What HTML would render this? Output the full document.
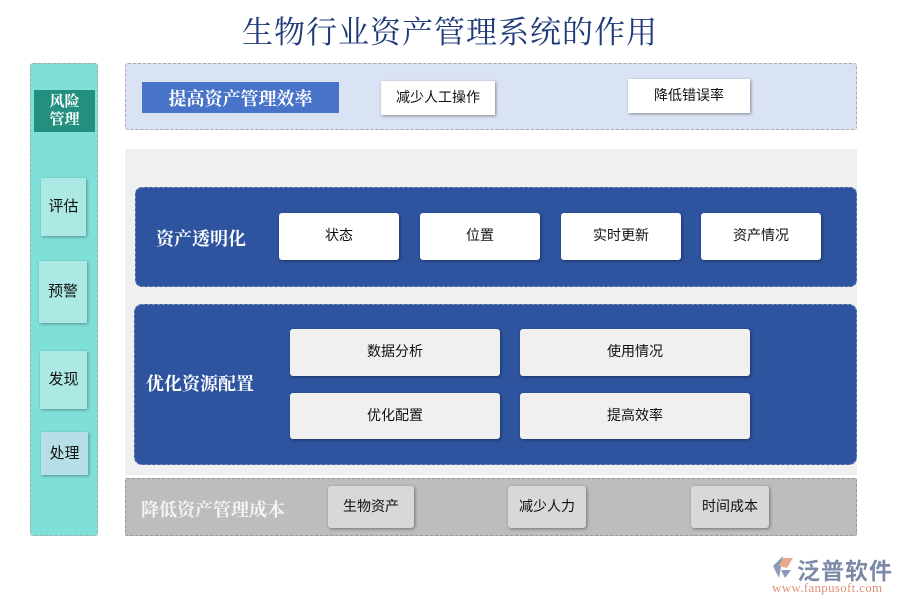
<!DOCTYPE html>
<html><head><meta charset="utf-8"><style>
*{margin:0;padding:0;box-sizing:border-box}
body{width:900px;height:600px;background:#fff;position:relative;font-family:"Liberation Sans","Noto Sans CJK SC",sans-serif;overflow:hidden}
.a{position:absolute}
.c{display:flex;align-items:center;justify-content:center;text-align:center;padding-bottom:3px}
.title{left:0;top:7px;width:900px;font-family:"Liberation Serif","Noto Serif CJK SC",serif;font-size:31px;color:#1f3a78;text-align:center;font-weight:normal;letter-spacing:1px}
.side{left:30px;top:63px;width:68px;height:473px;background:#7fe0d8;border:1px dashed #aaa;border-radius:3px}
.sb{background:#ade9e4;box-shadow:1px 1px 3px rgba(0,0,0,.35);font-size:15px;color:#111}
.serif{font-family:"Liberation Serif","Noto Serif CJK SC",serif;font-weight:bold}
.wb{background:#fff;border-radius:3px;box-shadow:1px 1px 3px rgba(0,0,0,.4);font-size:14px;color:#111}
.gb{background:#f0f0f0;border-radius:3px;box-shadow:1px 1px 3px rgba(0,0,0,.4);font-size:14px;color:#111}
</style></head><body>
<div class="a title">生物行业资产管理系统的作用</div>
<div class="a side"></div>
<div class="a c serif" style="left:34px;top:90px;width:61px;height:42px;background:#23907f;color:#fff;font-size:15px;line-height:18px;padding:0">风险<br>管理</div>
<div class="a c sb" style="left:41px;top:178px;width:45px;height:58px">评估</div>
<div class="a c sb" style="left:39px;top:261px;width:48px;height:62px">预警</div>
<div class="a c sb" style="left:40px;top:351px;width:47px;height:58px">发现</div>
<div class="a c sb" style="left:41px;top:432px;width:47px;height:43px;background:#b7dfe8">处理</div>

<div class="a" style="left:125px;top:63px;width:732px;height:67px;background:#dae3f4;border:1px dashed #aaa;border-radius:3px"></div>
<div class="a c serif" style="left:142px;top:82px;width:197px;height:31px;background:#4773c9;color:#fff;font-size:18px;padding:0">提高资产管理效率</div>
<div class="a c wb" style="left:381px;top:81px;width:114px;height:34px;border-radius:0">减少人工操作</div>
<div class="a c wb" style="left:628px;top:79px;width:122px;height:34px;border-radius:0">降低错误率</div>

<div class="a" style="left:125px;top:149px;width:732px;height:326px;background:#f0f0f0"></div>
<div class="a" style="left:135px;top:187px;width:722px;height:100px;background:#2e54a0;border-radius:7px;border:1px dashed #7a8cb8"></div>
<div class="a serif" style="left:156px;top:225px;color:#fff;font-size:18px">资产透明化</div>
<div class="a c wb" style="left:279px;top:213px;width:120px;height:47px">状态</div>
<div class="a c wb" style="left:420px;top:213px;width:120px;height:47px">位置</div>
<div class="a c wb" style="left:561px;top:213px;width:120px;height:47px">实时更新</div>
<div class="a c wb" style="left:701px;top:213px;width:120px;height:47px">资产情况</div>

<div class="a" style="left:134px;top:304px;width:723px;height:161px;background:#2e54a0;border-radius:8px;border:1px dashed #7a8cb8"></div>
<div class="a serif" style="left:146px;top:370px;color:#fff;font-size:18px">优化资源配置</div>
<div class="a c gb" style="left:290px;top:329px;width:210px;height:47px">数据分析</div>
<div class="a c gb" style="left:520px;top:329px;width:230px;height:47px">使用情况</div>
<div class="a c gb" style="left:290px;top:393px;width:210px;height:46px">优化配置</div>
<div class="a c gb" style="left:520px;top:393px;width:230px;height:46px">提高效率</div>

<div class="a" style="left:125px;top:478px;width:732px;height:58px;background:#bdbdbd;border:1px dashed #999;border-radius:2px"></div>
<div class="a serif" style="left:141px;top:496px;color:#f4f4f4;font-size:18px">降低资产管理成本</div>
<div class="a c gb" style="left:328px;top:486px;width:86px;height:42px;background:#d8d8d8">生物资产</div>
<div class="a c gb" style="left:508px;top:486px;width:78px;height:42px;background:#d8d8d8">减少人力</div>
<div class="a c gb" style="left:691px;top:486px;width:78px;height:42px;background:#d8d8d8">时间成本</div>

<svg class="a" style="left:769px;top:554px" width="26" height="26" viewBox="0 0 26 26"><path d="M14 2 L4 12 L10 24 Z" fill="#8a9ab8"/><path d="M14 4 L24 4 L18 14 L10 12 Z" fill="#e8a88a"/><path d="M12 16 L22 16 L16 24 Z" fill="#8a9ab8"/></svg>
<div class="a" style="left:797px;top:552px;font-size:23px;color:#7c8aa8;font-weight:bold;letter-spacing:1px">泛普软件</div>
<div class="a" style="left:772px;top:580px;font-family:'Liberation Serif',serif;font-size:13px;color:#e0907a;letter-spacing:0.3px">www.fanpusoft.com</div>
</body></html>
